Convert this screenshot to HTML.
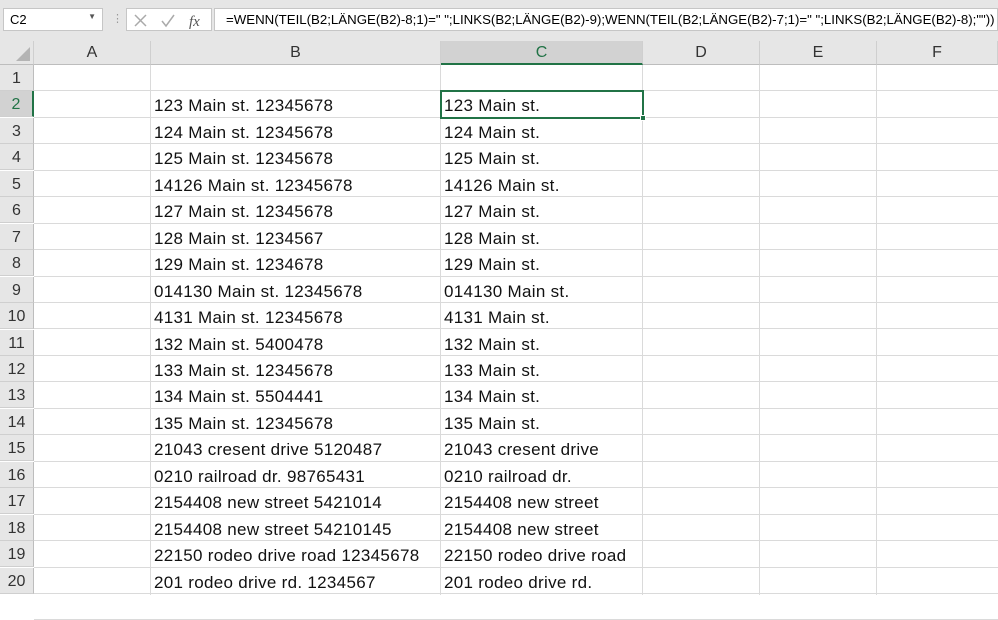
<!DOCTYPE html>
<html><head><meta charset="utf-8"><style>
*{margin:0;padding:0;box-sizing:border-box}
body{width:998px;height:595px;overflow:hidden;background:#fff;font-family:"Liberation Sans",sans-serif;position:relative}
.tb{position:absolute;left:0;top:0;width:998px;height:41px;background:#e6e6e6}
.nb{position:absolute;left:3px;top:8px;width:100px;height:23px;background:#fff;border:1px solid #c6c6c6;font-size:13px;padding:3px 6px}
.fx{position:absolute;left:126px;top:8px;width:86px;height:23px;background:#fff;border:1px solid #c6c6c6}
.fb{position:absolute;left:214px;top:8px;width:784px;height:23px;background:#fff;border:1px solid #c6c6c6;font-size:13.25px;padding:3px 0 0 11px;white-space:nowrap;overflow:hidden}
.hdr{position:absolute;top:41px;height:24px;background:#e6e6e6;border-bottom:1px solid #bdbdbd;border-right:1px solid #cfcfcf;font-size:16px;text-align:center;line-height:24px;color:#333}
.rh{position:absolute;left:0;width:34px;background:#e6e6e6;border-bottom:1px solid #cfcfcf;border-right:1px solid #bdbdbd;font-size:16px;text-align:center;color:#333}
.c{position:absolute;font-size:17px;letter-spacing:0.3px;color:#111;white-space:nowrap;padding-left:3px;padding-top:2px}
.gl{position:absolute;background:#dadada}
</style></head><body>
<div class="tb">
<div class="nb">C2<span style="position:absolute;right:6px;top:3px;font-size:8px;color:#555">▼</span></div>
<div style="position:absolute;left:112px;top:12px;color:#999;font-size:11px">⋮</div>
<div class="fx">
<svg width="86" height="23" style="position:absolute;left:0;top:0"><path d="M8 6l11 11M19 6L8 17" stroke="#aaa" stroke-width="1.5" fill="none"/><path d="M35 12l4 5 8-11" stroke="#aaa" stroke-width="1.5" fill="none"/><text x="62" y="17" font-family="Liberation Serif" font-style="italic" font-size="15" fill="#555">fx</text></svg>
</div>
<div class="fb">=WENN(TEIL(B2;LÄNGE(B2)-8;1)=" ";LINKS(B2;LÄNGE(B2)-9);WENN(TEIL(B2;LÄNGE(B2)-7;1)=" ";LINKS(B2;LÄNGE(B2)-8);""))</div>
</div>
<div class="hdr" style="left:0;width:34px"><svg width="34" height="24"><path d="M30 20H16L30 6z" fill="#b4b4b4"/></svg></div>
<div class="hdr" style="left:34px;width:117px">A</div>
<div class="hdr" style="left:151px;width:290px">B</div>
<div class="hdr" style="left:441px;width:202px;background:#d2d2d2;color:#217346;border-bottom:2px solid #217346">C</div>
<div class="hdr" style="left:643px;width:117px">D</div>
<div class="hdr" style="left:760px;width:117px">E</div>
<div class="hdr" style="left:877px;width:121px">F</div>
<div id="g"></div>
<script>
var B=["","123 Main st. 12345678","124 Main st. 12345678","125 Main st. 12345678","14126 Main st. 12345678","127 Main st. 12345678","128 Main st. 1234567","129 Main st. 1234678","014130 Main st. 12345678","4131 Main st. 12345678","132 Main st. 5400478","133 Main st. 12345678","134 Main st. 5504441","135 Main st. 12345678","21043 cresent drive 5120487","0210 railroad dr. 98765431","2154408 new street 5421014","2154408 new street 54210145","22150 rodeo drive road 12345678","201 rodeo drive rd. 1234567"];
var C=["","123 Main st.","124 Main st.","125 Main st.","14126 Main st.","127 Main st.","128 Main st.","129 Main st.","014130 Main st.","4131 Main st.","132 Main st.","133 Main st.","134 Main st.","135 Main st.","21043 cresent drive","0210 railroad dr.","2154408 new street","2154408 new street","22150 rodeo drive road","201 rodeo drive rd."];
var h="",rh=26.45,t0=65;
[151,441,643,760,877].forEach(function(x){h+='<div class="gl" style="left:'+(x-1)+'px;top:65px;width:1px;height:530px"></div>'});
for(var i=0;i<21;i++){var t=t0+i*rh;
h+='<div class="gl" style="left:34px;top:'+Math.round(t+rh-1)+'px;width:964px;height:1px"></div>';
if(i<20){var st=i==1?'background:#d2d2d2;color:#217346;border-right:2px solid #217346;':'';
h+='<div class="rh" style="top:'+Math.round(t)+'px;height:'+Math.round(rh)+'px;line-height:'+(Math.round(rh)+2)+'px;'+st+'">'+(i+1)+'</div>';
h+='<div class="c" style="left:151px;top:'+Math.round(t)+'px;line-height:'+Math.round(rh)+'px">'+B[i]+'</div>';
h+='<div class="c" style="left:441px;top:'+Math.round(t)+'px;line-height:'+Math.round(rh)+'px">'+C[i]+'</div>';}}
h+='<div style="position:absolute;left:440px;top:90px;width:204px;height:29px;border:2px solid #217346"></div><div style="position:absolute;left:640px;top:115px;width:6px;height:6px;background:#217346;border:1px solid #fff"></div>';
document.getElementById('g').innerHTML=h;
</script>
</body></html>
